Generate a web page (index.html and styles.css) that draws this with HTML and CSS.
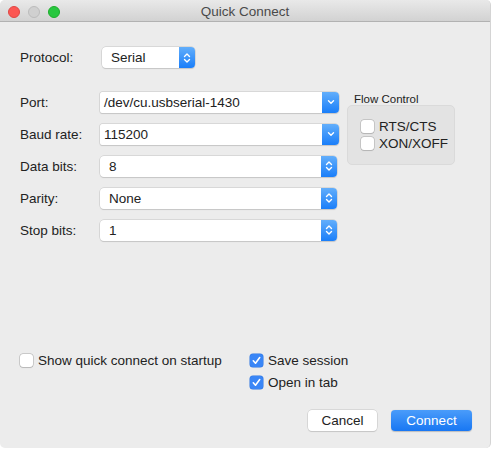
FILE: index.html
```html
<!DOCTYPE html>
<html>
<head>
<meta charset="utf-8">
<link rel="stylesheet" href="styles.css">
</head>
<body>
<div class="window">
  <div class="titlebar">
    <div class="lights">
      <span class="light red"></span>
      <span class="light gray"></span>
      <span class="light green"></span>
    </div>
    <div class="title">Quick Connect</div>
    <div></div>
  </div>
  <div class="content">
    <div class="protocol">
      <span class="label">Protocol:</span>
      <div class="popup proto">
        <span class="value">Serial</span>
        <span class="btn"><svg width="8" height="12" viewBox="0 0 8 12"><path d="M1.5 4.5 L4 2 L6.5 4.5 M1.5 7.5 L4 10 L6.5 7.5" fill="none" stroke="#fff" stroke-width="1.4" stroke-linecap="round" stroke-linejoin="round"/></svg></span>
      </div>
    </div>
    <div class="main">
      <div class="form">
        <span class="label">Port:</span>
        <div class="combo"><span class="value">/dev/cu.usbserial-1430</span><span class="btn"><svg width="8" height="6" viewBox="0 0 8 6"><path d="M1.5 1.8 L4 4.2 L6.5 1.8" fill="none" stroke="#fff" stroke-width="1.4" stroke-linecap="round" stroke-linejoin="round"/></svg></span></div>
        <span class="label">Baud rate:</span>
        <div class="combo"><span class="value">115200</span><span class="btn"><svg width="8" height="6" viewBox="0 0 8 6"><path d="M1.5 1.8 L4 4.2 L6.5 1.8" fill="none" stroke="#fff" stroke-width="1.4" stroke-linecap="round" stroke-linejoin="round"/></svg></span></div>
        <span class="label">Data bits:</span>
        <div class="popup"><span class="value">8</span><span class="btn"><svg width="8" height="12" viewBox="0 0 8 12"><path d="M1.5 4.5 L4 2 L6.5 4.5 M1.5 7.5 L4 10 L6.5 7.5" fill="none" stroke="#fff" stroke-width="1.4" stroke-linecap="round" stroke-linejoin="round"/></svg></span></div>
        <span class="label">Parity:</span>
        <div class="popup"><span class="value">None</span><span class="btn"><svg width="8" height="12" viewBox="0 0 8 12"><path d="M1.5 4.5 L4 2 L6.5 4.5 M1.5 7.5 L4 10 L6.5 7.5" fill="none" stroke="#fff" stroke-width="1.4" stroke-linecap="round" stroke-linejoin="round"/></svg></span></div>
        <span class="label">Stop bits:</span>
        <div class="popup"><span class="value">1</span><span class="btn"><svg width="8" height="12" viewBox="0 0 8 12"><path d="M1.5 4.5 L4 2 L6.5 4.5 M1.5 7.5 L4 10 L6.5 7.5" fill="none" stroke="#fff" stroke-width="1.4" stroke-linecap="round" stroke-linejoin="round"/></svg></span></div>
      </div>
      <div class="flow">
        <div class="flow-title">Flow Control</div>
        <div class="flow-box">
          <label class="check"><span class="box"></span>RTS/CTS</label>
          <label class="check"><span class="box"></span>XON/XOFF</label>
        </div>
      </div>
    </div>
    <div class="options">
      <div class="opt-col left">
        <label class="check"><span class="box"></span>Show quick connect on startup</label>
      </div>
      <div class="opt-col">
        <label class="check"><span class="box on"><svg width="13" height="13" viewBox="0 0 13 13"><path d="M3.3 6.8 L5.5 9.2 L9.7 3.6" fill="none" stroke="#fff" stroke-width="1.6" stroke-linecap="round" stroke-linejoin="round"/></svg></span>Save session</label>
        <label class="check"><span class="box on"><svg width="13" height="13" viewBox="0 0 13 13"><path d="M3.3 6.8 L5.5 9.2 L9.7 3.6" fill="none" stroke="#fff" stroke-width="1.6" stroke-linecap="round" stroke-linejoin="round"/></svg></span>Open in tab</label>
      </div>
    </div>
    <div class="buttons">
      <button class="button cancel">Cancel</button>
      <button class="button primary">Connect</button>
    </div>
  </div>
</div>
</body>
</html>
```

FILE: styles.css
```css
* { box-sizing: border-box; }
html, body { margin: 0; padding: 0; }
body {
  width: 492px;
  height: 450px;
  background: #ffffff;
  font-family: "Liberation Sans", Arial, sans-serif;
  font-size: 13.5px;
  color: #222222;
}
.window {
  width: 491px;
  height: 448px;
  background: #ececec;
  border-radius: 5px;
  overflow: hidden;
  border-right: 1px solid #d4d4d4;
}
.titlebar {
  height: 22px;
  display: grid;
  grid-template-columns: 1fr auto 1fr;
  align-items: center;
  background: linear-gradient(#e9e9e9, #d2d2d2);
  border-bottom: 1px solid #b2b2b2;
}
.lights {
  display: flex;
  gap: 8px;
  padding-left: 8px;
  padding-top: 2px;
}
.light {
  width: 12px;
  height: 12px;
  border-radius: 50%;
}
.red { background: #fc5753; border: 1px solid #df4744; }
.gray { background: #d0d0d0; border: 1px solid #bcbcbc; }
.green { background: #28c73f; border: 1px solid #1dad2b; }
.title {
  color: #4a4a4a;
  font-size: 13.5px;
  padding-top: 2px;
}
.content {
  padding: 0 18px 0 20px;
}
.label {
  color: #222;
}
.protocol {
  display: grid;
  grid-template-columns: 82px auto;
  align-items: center;
  margin-top: 25px;
  height: 21px;
}
.popup, .combo {
  display: flex;
  align-items: stretch;
  height: 21px;
  background: #fff;
  border-radius: 4px;
  box-shadow: 0 0 0 0.5px #c4c4c4, 0 1px 1px rgba(0,0,0,0.15);
}
.popup .value {
  flex: 1;
  padding-left: 9px;
  line-height: 21px;
}
.combo {
  border-radius: 2px 4px 4px 2px;
}
.combo .value {
  flex: 1;
  padding-left: 4px;
  line-height: 21px;
}
.btn {
  width: 16px;
  display: flex;
  align-items: center;
  justify-content: center;
  background: linear-gradient(#62aefb, #1a7ef9);
  border-radius: 0 4px 4px 0;
}
.combo .btn { width: 17px; }
.proto { width: 93px; }
.main {
  display: flex;
  margin-top: 23px;
}
.form {
  display: grid;
  grid-template-columns: 80px 239px;
  grid-auto-rows: 22px;
  row-gap: 10px;
  align-items: center;
}
.form .popup { width: 237px; }
.flow {
  margin-left: 8px;
  margin-top: 2px;
}
.flow-title {
  font-size: 11.5px;
  padding-left: 7px;
  height: 12px;
  line-height: 12px;
}
.flow-box {
  width: 108px;
  height: 60px;
  background: #e3e3e3;
  border: 1px solid #dadada;
  border-radius: 5px;
  padding: 14px 0 0 13px;
  display: flex;
  flex-direction: column;
  gap: 4px;
}
.check {
  display: flex;
  align-items: center;
  gap: 5px;
  height: 13px;
  white-space: nowrap;
}
.box {
  width: 13px;
  height: 13px;
  flex: none;
  background: #fff;
  border-radius: 3px;
  box-shadow: 0 0 0 0.5px #a9a9a9, 0 0.5px 1px rgba(0,0,0,0.15);
}
.box.on {
  background: #3a86f6;
  box-shadow: 0 0 0 0.5px #2d74e0;
}
.box svg { display: block; }
.options {
  display: flex;
  margin-top: 113px;
}
.opt-col {
  display: flex;
  flex-direction: column;
  gap: 9px;
}
.opt-col.left { width: 230px; }
.buttons {
  display: flex;
  justify-content: flex-end;
  gap: 14px;
  margin-top: 21px;
}
.button {
  font-family: "Liberation Sans", Arial, sans-serif;
  font-size: 13.5px;
  height: 21px;
  padding: 0;
  border: none;
  border-radius: 4px;
}
.cancel {
  width: 69px;
  background: #fff;
  color: #222;
  box-shadow: 0 0 0 0.5px #c4c4c4, 0 1px 1px rgba(0,0,0,0.15);
}
.primary {
  width: 81px;
  background: linear-gradient(#4a9cfa, #1877f3);
  color: #fff;
  box-shadow: 0 0.5px 1px rgba(0,0,0,0.2);
}
```
